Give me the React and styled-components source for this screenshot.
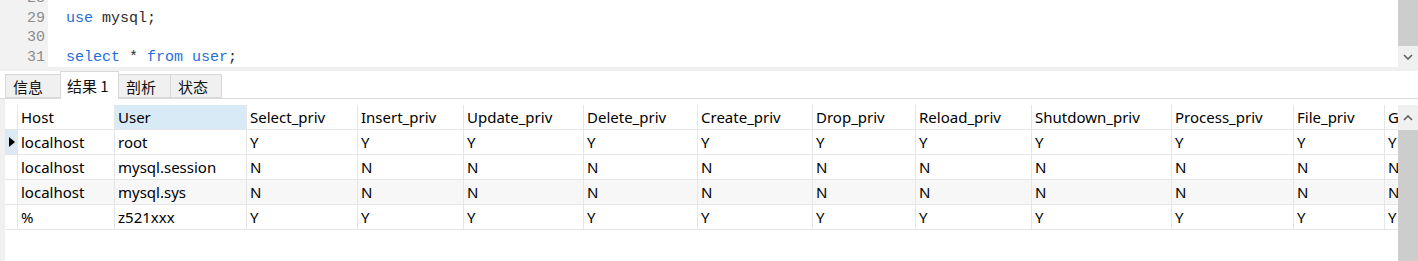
import React from "react";
import styled, { createGlobalStyle } from "styled-components";

const GlobalStyle = createGlobalStyle`
  html, body { margin: 0; padding: 0; background: #fff; }
  body { font-family: "Noto Sans", "Noto Sans CJK SC", sans-serif; }
`;

const columns = [
  { name: "Host", w: 97 },
  { name: "User", w: 132 },
  { name: "Select_priv", w: 111 },
  { name: "Insert_priv", w: 106 },
  { name: "Update_priv", w: 120 },
  { name: "Delete_priv", w: 114 },
  { name: "Create_priv", w: 115 },
  { name: "Drop_priv", w: 103 },
  { name: "Reload_priv", w: 116 },
  { name: "Shutdown_priv", w: 140 },
  { name: "Process_priv", w: 122 },
  { name: "File_priv", w: 91 },
  { name: "Grant_priv", w: 100 },
];

const rows = [
  { host: "localhost", user: "root", v: "Y", current: true },
  { host: "localhost", user: "mysql.session", v: "N" },
  { host: "localhost", user: "mysql.sys", v: "N", hover: true },
  { host: "%", user: "z521xxx", v: "Y" },
];

const Page = styled.div`
  width: 1418px;
  height: 261px;
  overflow: hidden;
  display: flex;
  flex-direction: column;
`;

const Editor = styled.div`
  height: 67px;
  display: flex;
  overflow: hidden;
`;

const Gutter = styled.div`
  width: 48px;
  background: #f2f2f2;
  overflow: hidden;
`;

const CodeArea = styled.div`
  flex: 1;
  overflow: hidden;
  padding-left: 18px;
`;

const Lines = styled.div`
  margin-top: -11px;
  font-family: "Liberation Mono", "DejaVu Sans Mono", monospace;
  font-size: 15px;
  line-height: 19.5px;
`;

const LineNo = styled.div`
  text-align: right;
  padding-right: 3px;
  color: #8c8c8c;
`;

const CodeLine = styled.div`
  color: #2b2b2b;
  white-space: pre;
  height: 19.5px;
`;

const Kw = styled.span`
  color: #1f6fd6;
`;

const VScroll = styled.div`
  width: 20px;
  display: flex;
  flex-direction: column;
  background: #f0f0f0;
  flex-shrink: 0;
`;

const Thumb = styled.div`
  background: #cdcdcd;
  flex: ${(p) => (p.$fill ? 1 : "none")};
  height: ${(p) => (p.$h ? `${p.$h}px` : "auto")};
`;

const ArrowBox = styled.div`
  height: ${(p) => p.$h}px;
  display: flex;
  align-items: center;
  justify-content: center;
  background: #f0f0f0;
`;

const Strip = styled.div`
  height: 4px;
  background: #f0f0f0;
`;

const TabBar = styled.div`
  height: 27px;
  display: flex;
  align-items: flex-end;
  padding-left: 5px;
  border-bottom: 1px solid #dadada;
  font-family: "Noto Sans CJK SC", "Noto Sans", sans-serif;
  font-size: 15px;
`;

const Tab = styled.div`
  box-sizing: border-box;
  height: ${(p) => (p.$active ? 28 : 24)}px;
  margin-bottom: ${(p) => (p.$active ? -1 : 0)}px;
  width: ${(p) => p.$w}px;
  padding-left: ${(p) => (p.$active ? 6 : 7)}px;
  background: ${(p) => (p.$active ? "#fff" : "#f0f0f0")};
  border: 1px solid #d9d9d9;
  border-bottom: ${(p) => (p.$active ? "none" : "1px solid #d9d9d9")};
  margin-left: ${(p) => (p.$first ? 0 : -1)}px;
  display: flex;
  align-items: center;
  color: #111;
  line-height: 1;
  white-space: pre;
  position: relative;
  z-index: ${(p) => (p.$active ? 1 : 0)};
`;

const Results = styled.div`
  flex: 1;
  display: flex;
  min-height: 0;
`;

const LeftStrip = styled.div`
  width: 5px;
  background: #f0f0f0;
  flex-shrink: 0;
`;

const GridArea = styled.div`
  flex: 1;
  overflow: hidden;
  padding-top: 6px;
`;

const Grid = styled.div`
  display: grid;
  grid-template-columns: 13px ${columns.map((c) => `${c.w}px`).join(" ")};
  font-family: "Noto Sans", "Segoe UI", sans-serif;
  font-size: 15px;
  color: #000;
`;

const Cell = styled.div`
  box-sizing: border-box;
  height: 25px;
  padding-left: 3px;
  display: flex;
  align-items: center;
  white-space: nowrap;
  overflow: hidden;
  border-right: 1px solid #e6e6e6;
  border-bottom: 1px solid #e6e6e6;
  background: ${(p) => (p.$sel ? "#d9eaf7" : p.$alt ? "#f7f7f7" : "#fff")};
`;

const Indicator = styled(Cell)`
  padding-left: 4px;
  background: ${(p) => (p.$current ? "#dde9f5" : "#fff")};
`;

const Triangle = styled.span`
  width: 0;
  height: 0;
  border-top: 5px solid transparent;
  border-bottom: 5px solid transparent;
  border-left: 6px solid #000;
`;

const GridScroll = styled(VScroll)`
  margin-top: 6px;
`;

function Chevron({ up }) {
  return (
    <svg width="10" height="6" viewBox="0 0 10 6">
      <polyline
        points={up ? "1,5 5,1 9,5" : "1,1 5,5 9,1"}
        fill="none"
        stroke="#606060"
        strokeWidth="1.6"
      />
    </svg>
  );
}

export default function App() {
  return (
    <Page>
      <GlobalStyle />
      <Editor>
        <Gutter>
          <Lines>
            <LineNo>28</LineNo>
            <LineNo>29</LineNo>
            <LineNo>30</LineNo>
            <LineNo>31</LineNo>
          </Lines>
        </Gutter>
        <CodeArea>
          <Lines>
            <CodeLine> </CodeLine>
            <CodeLine>
              <Kw>use</Kw> mysql;
            </CodeLine>
            <CodeLine> </CodeLine>
            <CodeLine>
              <Kw>select</Kw> * <Kw>from</Kw> <Kw>user</Kw>;
            </CodeLine>
          </Lines>
        </CodeArea>
        <VScroll>
          <Thumb $h={46} />
          <ArrowBox $h={21}>
            <Chevron />
          </ArrowBox>
        </VScroll>
      </Editor>
      <Strip />
      <TabBar>
        <Tab $w={56} $first>信息</Tab>
        <Tab $w={59} $active>结果 1</Tab>
        <Tab $w={53}>剖析</Tab>
        <Tab $w={52}>状态</Tab>
      </TabBar>
      <Results>
        <LeftStrip />
        <GridArea>
          <Grid>
            <Indicator />
            {columns.map((c) => (
              <Cell key={c.name} $sel={c.name === "User"}>
                {c.name}
              </Cell>
            ))}
            {rows.map((r, i) => (
              <React.Fragment key={i}>
                <Indicator $current={r.current}>
                  {r.current && <Triangle />}
                </Indicator>
                <Cell $alt={r.hover}>{r.host}</Cell>
                <Cell $alt={r.hover}>{r.user}</Cell>
                {columns.slice(2).map((c) => (
                  <Cell key={c.name} $alt={r.hover}>
                    {r.v}
                  </Cell>
                ))}
              </React.Fragment>
            ))}
          </Grid>
        </GridArea>
        <GridScroll>
          <ArrowBox $h={25}>
            <Chevron up />
          </ArrowBox>
          <Thumb $fill />
        </GridScroll>
      </Results>
    </Page>
  );
}
